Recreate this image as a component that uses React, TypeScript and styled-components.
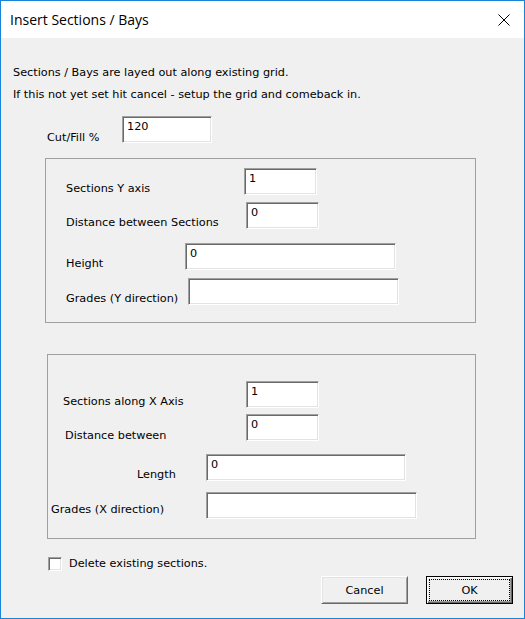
import React from "react";
import styled, { createGlobalStyle } from "styled-components";

const Global = createGlobalStyle`
  html, body { margin: 0; padding: 0; background: #ffffff; }
  * { box-sizing: border-box; }
`;

const UI_FONT = `"DejaVu Sans", "Liberation Sans", Arial, sans-serif`;

const Window = styled.div`
  width: 525px;
  height: 619px;
  border: 1px solid #1883d7;
  background: #f0f0f0;
  display: flex;
  flex-direction: column;
  font-family: ${UI_FONT};
  font-size: 11.25px;
  color: #000;
`;

const TitleBar = styled.div`
  height: 37px;
  flex-shrink: 0;
  background: #ffffff;
  display: flex;
  align-items: center;
  justify-content: space-between;
  padding: 0 14px 0 9px;
`;

const Title = styled.span`
  font-family: "Open Sans", "Noto Sans", sans-serif;
  font-size: 14px;
  color: #000;
`;

const CloseIcon = styled.svg`
  width: 12px;
  height: 12px;
  display: block;
`;

const Body = styled.div`
  flex: 1;
  display: flex;
  flex-direction: column;
  padding-top: 24px;
`;

const Intro = styled.p`
  margin: 0 0 0 12px;
  line-height: 22px;
`;

const FieldRow = styled.div<{ $mt: number; $ml: number }>`
  display: flex;
  align-items: flex-start;
  height: 27px;
  margin-top: ${(p) => p.$mt}px;
  margin-left: ${(p) => p.$ml}px;
`;

const FieldLabel = styled.span<{ $w: number; $dy: number }>`
  width: ${(p) => p.$w}px;
  flex-shrink: 0;
  padding-top: ${(p) => p.$dy}px;
  line-height: 14px;
  white-space: nowrap;
`;

const TextBox = styled.div<{ $w: number }>`
  width: ${(p) => p.$w}px;
  height: 27px;
  flex-shrink: 0;
  background: #ffffff;
  border: 1px solid;
  border-color: #a0a0a0 #ffffff #ffffff #a0a0a0;
  box-shadow: inset 1px 1px 0 #696969, inset -1px -1px 0 #e3e3e3;
  padding: 3px 3px 0 4px;
  line-height: 14px;
  color: #000;
`;

const GroupBox = styled.div<{ $mt: number; $ml: number; $w: number; $pb: number }>`
  margin-top: ${(p) => p.$mt}px;
  margin-left: ${(p) => p.$ml}px;
  width: ${(p) => p.$w}px;
  border: 1px solid #a0a0a0;
  padding-bottom: ${(p) => p.$pb}px;
  display: flex;
  flex-direction: column;
`;

const CheckRow = styled.label`
  display: flex;
  align-items: center;
  gap: 7px;
  margin-top: 18px;
  margin-left: 47px;
  height: 14px;
  line-height: 14px;
`;

const CheckBox = styled.span`
  width: 14px;
  height: 14px;
  background: #ffffff;
  border: 1px solid;
  border-color: #a0a0a0 #ffffff #ffffff #a0a0a0;
  box-shadow: inset 1px 1px 0 #696969, inset -1px -1px 0 #e3e3e3;
`;

const ButtonRow = styled.div`
  display: flex;
  justify-content: flex-end;
  gap: 18px;
  margin-top: 5px;
  padding-right: 11px;
`;

const Button = styled.button<{ $default?: boolean }>`
  position: relative;
  width: 87px;
  height: 28px;
  margin: 0;
  padding: 0;
  font-family: ${UI_FONT};
  font-size: 11.25px;
  color: #000;
  background: #f0f0f0;
  border: 1px solid;
  border-color: ${(p) => (p.$default ? "#000 #000 #000 #000" : "#ffffff #696969 #696969 #ffffff")};
  box-shadow: ${(p) =>
    p.$default
      ? "inset 1px 1px 0 #ffffff, inset -1px -1px 0 #696969, inset -2px -2px 0 #a0a0a0"
      : "inset 1px 1px 0 #e3e3e3, inset -1px -1px 0 #a0a0a0"};
  &::after {
    content: "";
    display: ${(p) => (p.$default ? "block" : "none")};
    position: absolute;
    inset: 2px 2px 2px 2px;
    border: 1px dotted #000;
  }
`;

type Field = { label: string; value?: string; mt: number; ml: number; lw: number; dy: number; w: number };

const group1: Field[] = [
  { label: "Sections Y axis", value: "1", mt: 9, ml: 20, lw: 178, dy: 14, w: 73 },
  { label: "Distance between Sections", value: "0", mt: 7, ml: 20, lw: 180, dy: 14, w: 73 },
  { label: "Height", value: "0", mt: 14, ml: 20, lw: 119, dy: 14, w: 211 },
  { label: "Grades (Y direction)", mt: 8, ml: 20, lw: 122, dy: 14, w: 211 },
];

const group2: Field[] = [
  { label: "Sections along X Axis", value: "1", mt: 26, ml: 15, lw: 183, dy: 14, w: 73 },
  { label: "Distance between", value: "0", mt: 6, ml: 17, lw: 181, dy: 15, w: 73 },
  { label: "Length", value: "0", mt: 13, ml: 89, lw: 69, dy: 14, w: 200 },
  { label: "Grades (X direction)", mt: 11, ml: 3, lw: 155, dy: 11, w: 211 },
];

const FieldLine = ({ f }: { f: Field }) => (
  <FieldRow $mt={f.mt} $ml={f.ml}>
    <FieldLabel $w={f.lw} $dy={f.dy}>{f.label}</FieldLabel>
    <TextBox $w={f.w}>{f.value ?? ""}</TextBox>
  </FieldRow>
);

export default function App() {
  return (
    <>
      <Global />
      <Window>
        <TitleBar>
          <Title>Insert Sections / Bays</Title>
          <CloseIcon viewBox="0 0 12 12">
            <path d="M0.5 0.5 L11.5 11.5 M11.5 0.5 L0.5 11.5" stroke="#000" strokeWidth="1" fill="none" />
          </CloseIcon>
        </TitleBar>
        <Body>
          <Intro>
            Sections / Bays are layed out along existing grid.
            <br />
            If this not yet set hit cancel - setup the grid and comeback in.
          </Intro>
          <FieldLine f={{ label: "Cut/Fill %", value: "120", mt: 10, ml: 46, lw: 75, dy: 15, w: 90 }} />
          <GroupBox $mt={15} $ml={44} $w={431} $pb={17}>
            {group1.map((f) => (
              <FieldLine key={f.label} f={f} />
            ))}
          </GroupBox>
          <GroupBox $mt={31} $ml={46} $w={429} $pb={19}>
            {group2.map((f) => (
              <FieldLine key={f.label} f={f} />
            ))}
          </GroupBox>
          <CheckRow>
            <CheckBox />
            <span>Delete existing sections.</span>
          </CheckRow>
          <ButtonRow>
            <Button>Cancel</Button>
            <Button $default>OK</Button>
          </ButtonRow>
        </Body>
      </Window>
    </>
  );
}
